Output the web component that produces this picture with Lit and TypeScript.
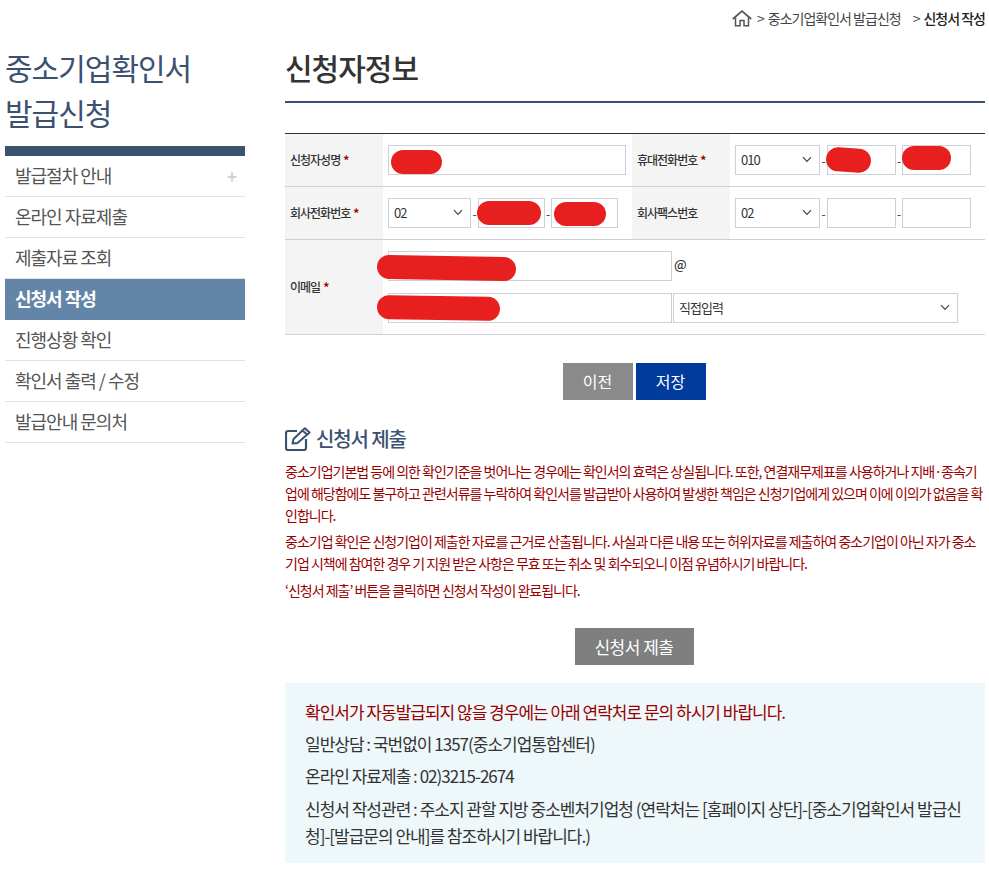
import { LitElement, html, css } from "lit";
import { customElement } from "lit/decorators.js";

const chevron = html`<svg class="chev" width="10" height="7" viewBox="0 0 10 7"><path d="M1 1.2 L5 5.4 L9 1.2" fill="none" stroke="#444" stroke-width="1.2"/></svg>`;

@customElement("app-root")
export class AppRoot extends LitElement {
  static styles = css`
    :host { display: block; width: 989px; height: 870px; overflow: hidden; background: #fff; color: #333;
      font-family: "Noto Sans CJK KR", "Noto Sans", sans-serif; }
    * { box-sizing: border-box; }
    .crumb { height: 36px; display: flex; justify-content: flex-end; align-items: center; padding: 0 4px 0 0; font-size: 14px; letter-spacing: -1px; color: #444; }
    .crumb svg { margin-right: 5px; }
    .crumb .gt { margin-right: 4px; }
    .crumb b { font-weight: 500; color: #222; }
    .crumb .sp { margin-left: 12px; }
    .page { display: flex; padding-left: 5px; }
    .side { width: 240px; flex: none; margin-right: 40px; }
    .side h2 { margin: 0; height: 110px; font-size: 30px; line-height: 45px; font-weight: 400; color: #3b5170; letter-spacing: -1px; padding-top: 9px; }
    .bar { height: 10px; background: #3b5170; }
    .side ul { list-style: none; margin: 0; padding: 0; }
    .side li { height: 41px; display: flex; align-items: center; justify-content: space-between; padding: 0 9px 2px 10px; border-bottom: 1px solid #e2e2e2; font-size: 18px; letter-spacing: -1px; color: #555; }
    .side li.on { background: #6285a8; color: #fff; font-weight: 700; border-bottom-color: #6285a8; }
    .side .plus { color: #c9ced6; font-size: 17px; font-weight: 700; }
    .main { width: 700px; flex: none; }
    .main h1 { margin: 0; height: 67px; font-size: 30px; line-height: 62px; font-weight: 500; color: #333; border-bottom: 2px solid #3b5170; letter-spacing: -1px; }
    .form { margin-top: 30px; display: grid; grid-template-columns: 98px 249px 98px 255px; grid-template-rows: 53px 53px 95px; border-top: 1px solid #333; }
    .th { background: #f4f4f4; font-size: 12px; font-weight: 500; letter-spacing: -1px; display: flex; align-items: center; padding: 0 0 2px 5px; border-bottom: 1px solid #ccd1d9; color: #333; gap: 3px; }
    .star { color: #990000; font-weight: 700; }
    .td { display: flex; align-items: center; padding-left: 5px; border-bottom: 1px solid #ccd1d9; }
    .td.email { flex-direction: column; align-items: flex-start; justify-content: center; gap: 12px; grid-column: 2 / 5; }
    .line { display: flex; align-items: center; }
    .box { position: relative; height: 30px; border: 1px solid #ccd1d9; background: #fff; flex: none; }
    .sel { position: relative; height: 30px; border: 1px solid #ccd1d9; background: #fff; flex: none; font-size: 13px; display: flex; align-items: center; justify-content: space-between; padding: 0 7px 2px 5px; color: #333; letter-spacing: -1px; }
    .dash { width: 7px; font-size: 12px; text-align: center; color: #333; flex: none; }
    .dash.n { width: 6px; }
    .at { font-size: 13px; font-weight: 500; margin-left: 2px; margin-top: -3px; color: #333; }
    .w238 { width: 238px; } .w83 { width: 83px; } .w67 { width: 67px; } .w85 { width: 85px; } .w69 { width: 69px; } .w284 { width: 284px; } .w285 { width: 285px; margin-left: 1px; }
    .blot { position: absolute; background: #e81f1f; height: 24px; border-radius: 12px; }
    .b-name { left: 2px; top: 4px; width: 51px; }
    .b-m1 { left: -2px; top: 2px; width: 45px; transform: rotate(4deg); }
    .b-m2 { left: -1px; top: 0; width: 49px; }
    .b-c1 { left: -2px; top: 2px; width: 64px; }
    .b-c2 { left: 2px; top: 3px; width: 52px; }
    .b-e1 { left: -12px; top: 4px; width: 139px; transform: rotate(1deg); }
    .b-e2 { left: -12px; top: 2px; width: 123px; transform: rotate(1deg); }
    .btns { display: flex; justify-content: center; gap: 3px; margin-top: 28px; padding-right: 2px; }
    .btn { height: 37px; border: 0; color: #fff; font-size: 16px; display: flex; align-items: center; justify-content: center; padding-bottom: 1px; }
    .gray { background: #8a8a8a; width: 70px; }
    .blue { background: #003a9b; width: 70px; }
    .sub { background: #7f7f7f; width: 119px; font-size: 17px; letter-spacing: -0.5px; }
    .head { display: flex; align-items: center; gap: 5px; margin-top: 25px; height: 27px; font-size: 20px; font-weight: 500; color: #3b5170; letter-spacing: -1.1px; }
    .notes { margin-top: 8px; font-size: 14px; line-height: 22px; color: #990000; letter-spacing: -1px; }
    .notes p { margin: 0 0 4px; }
    .notes .wide { margin-bottom: 5px; }
    .notes .last { margin-bottom: 6px; }
    .center { display: flex; justify-content: center; margin-top: 27px; padding-right: 2px; }
    .info { margin-top: 18px; height: 180px; background: #eef7fa; padding: 13px 20px; font-size: 17px; line-height: 32px; letter-spacing: -1px; color: #333; }
    .info p { margin: 0; }
    .info .red { color: #990000; }
    .info .tight { line-height: 27px; padding-top: 3px; }
  `;

  render() {
    return html`
      <div class="crumb">
        <svg width="20" height="17" viewBox="0 0 20 17"><path d="M0.8 9 L10 1.2 L19.2 9" fill="none" stroke="#555" stroke-width="1.7"/><path d="M3.5 7.5 V15.8 H8 V10.5 H12 V15.8 H16.5 V7.5" fill="none" stroke="#555" stroke-width="1.5"/></svg>
        <span class="gt">&gt;</span><span>중소기업확인서 발급신청</span>
        <span class="gt sp">&gt;</span><b>신청서 작성</b>
      </div>
      <div class="page">
        <nav class="side">
          <h2>중소기업확인서<br />발급신청</h2>
          <div class="bar"></div>
          <ul>
            <li>발급절차 안내<span class="plus">+</span></li>
            <li>온라인 자료제출</li>
            <li>제출자료 조회</li>
            <li class="on">신청서 작성</li>
            <li>진행상황 확인</li>
            <li>확인서 출력 / 수정</li>
            <li>발급안내 문의처</li>
          </ul>
        </nav>
        <main class="main">
          <h1>신청자정보</h1>
          <div class="form">
            <div class="th">신청자성명 <span class="star">*</span></div>
            <div class="td"><div class="box w238"><span class="blot b-name"></span></div></div>
            <div class="th">휴대전화번호 <span class="star">*</span></div>
            <div class="td line">
              <div class="sel w85">010 ${chevron}</div><span class="dash">-</span>
              <div class="box w69"><span class="blot b-m1"></span></div><span class="dash n">-</span>
              <div class="box w69"><span class="blot b-m2"></span></div>
            </div>
            <div class="th">회사전화번호 <span class="star">*</span></div>
            <div class="td line">
              <div class="sel w83">02 ${chevron}</div><span class="dash">-</span>
              <div class="box w67"><span class="blot b-c1"></span></div><span class="dash n">-</span>
              <div class="box w67"><span class="blot b-c2"></span></div>
            </div>
            <div class="th">회사팩스번호</div>
            <div class="td line">
              <div class="sel w85">02 ${chevron}</div><span class="dash">-</span>
              <div class="box w69"></div><span class="dash n">-</span>
              <div class="box w69"></div>
            </div>
            <div class="th">이메일 <span class="star">*</span></div>
            <div class="td email">
              <div class="line"><div class="box w284"><span class="blot b-e1"></span></div><span class="at">@</span></div>
              <div class="line"><div class="box w284"><span class="blot b-e2"></span></div><div class="sel w285">직접입력 ${chevron}</div></div>
            </div>
          </div>
          <div class="btns"><div class="btn gray">이전</div><div class="btn blue">저장</div></div>
          <div class="head">
            <svg width="26" height="24" viewBox="0 0 26 24"><path d="M12 4 H3 A2 2 0 0 0 1 6 V21 A2 2 0 0 0 3 23 H19 A2 2 0 0 0 21 21 V12" fill="none" stroke="#3b5170" stroke-width="2.2"/><path d="M7.5 16.5 L8.5 12 L19.8 1.2 L24.6 5.6 L12.5 16 Z M17.5 3.5 L22.3 7.8" fill="none" stroke="#3b5170" stroke-width="2" stroke-linejoin="round"/></svg>
            신청서 제출
          </div>
          <div class="notes">
            <p>중소기업기본법 등에 의한 확인기준을 벗어나는 경우에는 확인서의 효력은 상실됩니다. 또한, 연결재무제표를 사용하거나 지배·종속기업에 해당함에도 불구하고 관련서류를 누락하여 확인서를 발급받아 사용하여 발생한 책임은 신청기업에게 있으며 이에 이의가 없음을 확인합니다.</p>
            <p class="wide">중소기업 확인은 신청기업이 제출한 자료를 근거로 산출됩니다. 사실과 다른 내용 또는 허위자료를 제출하여 중소기업이 아닌 자가 중소기업 시책에 참여한 경우 기 지원 받은 사항은 무효 또는 취소 및 회수되오니 이점 유념하시기 바랍니다.</p>
            <p class="last">‘신청서 제출’ 버튼을 클릭하면 신청서 작성이 완료됩니다.</p>
          </div>
          <div class="center"><div class="btn sub">신청서 제출</div></div>
          <div class="info">
            <p class="red">확인서가 자동발급되지 않을 경우에는 아래 연락처로 문의 하시기 바랍니다.</p>
            <p>일반상담 : 국번없이 1357(중소기업통합센터)</p>
            <p>온라인 자료제출 : 02)3215-2674</p>
            <p class="tight">신청서 작성관련 : 주소지 관할 지방 중소벤처기업청 (연락처는 [홈페이지 상단]-[중소기업확인서 발급신청]-[발급문의 안내]를 참조하시기 바랍니다.)</p>
          </div>
        </main>
      </div>
    `;
  }
}
